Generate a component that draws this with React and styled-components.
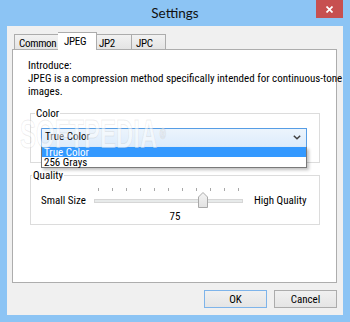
import React from "react";
import styled, { createGlobalStyle } from "styled-components";

const GlobalStyle = createGlobalStyle`
  html, body {
    margin: 0;
    padding: 0;
  }
  body {
    font-family: "Liberation Sans Narrow", "Roboto Condensed", "Liberation Sans", Arial, sans-serif;
    font-size: 11px;
    color: #000;
    background: #fff;
  }
`;

const tabs = [
  { label: "Common", width: 46 },
  { label: "JPEG", width: 35, active: true },
  { label: "JP2", width: 37 },
  { label: "JPC", width: 34 },
];

const SLIDER_VALUE = 75;

const App = () => {
  return (
    <>
      <GlobalStyle />
      <Window>
        <TitleBar>
          <Title>Settings</Title>
          <CloseButton>
            <svg width="7" height="7" viewBox="0 0 7 7">
              <path d="M0.5 0.5 L6.5 6.5 M6.5 0.5 L0.5 6.5" stroke="#fff" strokeWidth="1.7" />
            </svg>
          </CloseButton>
        </TitleBar>

        <Client>
          <TabRow>
            {tabs.map((t) => (
              <Tab key={t.label} $active={t.active} $width={t.width}>
                {t.label}
              </Tab>
            ))}
          </TabRow>

          <Panel>
            <Text>Introduce:</Text>
            <Text>
              JPEG is a compression method specifically intended for continuous-tone
              <br />
              images.
            </Text>

            <GroupBox $top={9}>
              <Legend $offset={4}>Color</Legend>
              <Combo>
                <span>True Color</span>
                <svg width="8" height="5" viewBox="0 0 8 5">
                  <path d="M0.8 0.8 L4 3.8 L7.2 0.8" stroke="#404040" strokeWidth="1.5" fill="none" />
                </svg>
                <DropList>
                  <DropItem $selected>True Color</DropItem>
                  <DropItem>256 Grays</DropItem>
                </DropList>
              </Combo>
            </GroupBox>

            <GroupBox $top={6} $quality>
              <Legend $offset={1}>Quality</Legend>
              <SliderRow>
                <SideLabel>Small Size</SideLabel>
                <Slider>
                  <Ticks>
                    {Array.from({ length: 11 }).map((_, i) => (
                      <Tick key={i} />
                    ))}
                  </Ticks>
                  <Track />
                  <Thumb style={{ left: 4 + (SLIDER_VALUE / 100) * 140 - 5 }}>
                    <svg width="10" height="16" viewBox="0 0 10 16">
                      <defs>
                        <linearGradient id="thumbFill" x1="0" y1="0" x2="0" y2="1">
                          <stop offset="0" stopColor="#f4f4f4" />
                          <stop offset="1" stopColor="#e2e2e2" />
                        </linearGradient>
                      </defs>
                      <path
                        d="M0.5 5 L5 0.5 L9.5 5 V15.5 H0.5 Z"
                        fill="url(#thumbFill)"
                        stroke="#a9a9a9"
                      />
                    </svg>
                  </Thumb>
                </Slider>
                <SideLabel $right>High Quality</SideLabel>
              </SliderRow>
              <ValueLabel>{SLIDER_VALUE}</ValueLabel>
            </GroupBox>
          </Panel>

          <ButtonRow>
            <Button $default>OK</Button>
            <Button>Cancel</Button>
          </ButtonRow>
        </Client>

        <Watermark>
          SOFTPEDIA<sup>®</sup>
        </Watermark>
      </Window>
    </>
  );
};

export default App;

const Window = styled.div`
  width: 350px;
  height: 322px;
  box-sizing: border-box;
  background: #8cc4f4;
  display: flex;
  flex-direction: column;
  position: relative;
  overflow: hidden;
`;

const TitleBar = styled.div`
  height: 26px;
  flex: none;
  display: grid;
  grid-template-columns: 1fr auto 1fr;
  align-items: start;
`;

const Title = styled.div`
  grid-column: 2;
  font-family: Lato, "Open Sans", sans-serif;
  font-size: 13.5px;
  line-height: 18px;
  padding-top: 4px;
  color: #111;
`;

const CloseButton = styled.div`
  grid-column: 3;
  justify-self: end;
  margin-right: 7px;
  width: 27px;
  height: 18px;
  background: #c75050;
  display: flex;
  align-items: center;
  justify-content: center;
`;

const Client = styled.div`
  flex: 1;
  margin: 0 7px 7px;
  background: #f0f0f0;
  display: flex;
  flex-direction: column;
  padding: 6px 6px 7px 5px;
`;

const TabRow = styled.div`
  display: flex;
  align-items: flex-end;
  height: 17px;
  padding-left: 2px;
`;

const Tab = styled.div`
  box-sizing: border-box;
  width: ${(p) => (p.$active ? p.$width + 4 : p.$width)}px;
  height: ${(p) => (p.$active ? 18 : 15)}px;
  margin: ${(p) => (p.$active ? "0 -2px -1px" : "0")};
  padding: ${(p) => (p.$active ? "2px 0 0 6px" : "2px 0 0 4px")};
  line-height: 13px;
  letter-spacing: -0.3px;
  border: 1px solid #acacac;
  border-bottom: none;
  background: ${(p) =>
    p.$active ? "#fff" : "linear-gradient(#f2f2f2, #e4e4e4)"};
  position: relative;
  z-index: ${(p) => (p.$active ? 2 : 1)};
  white-space: nowrap;
  overflow: hidden;
  & + & {
    border-left: ${(p) => (p.$active ? "1px solid #acacac" : "none")};
  }
`;

const Panel = styled.div`
  height: 234px;
  box-sizing: border-box;
  border: 1px solid #adadad;
  background: #fff;
  padding: 9px 16px 0 15px;
  position: relative;
  z-index: 1;
`;

const Text = styled.div`
  line-height: 13px;
  white-space: nowrap;
`;

const GroupBox = styled.fieldset`
  margin: ${(p) => p.$top}px 0 0 2px;
  padding: ${(p) => (p.$quality ? "5px 0 1px" : "8px 0 14px")};
  border: 1px solid #dcdcdc;
  min-width: 0;
`;

const Legend = styled.legend`
  margin-left: ${(p) => p.$offset}px;
  padding: 0 1px;
  line-height: 13px;
`;

const Combo = styled.div`
  position: relative;
  height: 20px;
  margin: 0 12px 0 10px;
  box-sizing: border-box;
  border: 1px solid #569de5;
  background: linear-gradient(#ecf4fc, #dcecfc);
  padding: 1px 5px 0 3px;
  line-height: 13px;
  display: flex;
  align-items: flex-start;
  justify-content: space-between;
  svg {
    margin-top: 5px;
  }
`;

const DropList = styled.div`
  position: absolute;
  top: 100%;
  left: -1px;
  right: -1px;
  background: #fff;
  border: 1px solid #7a7a7a;
  border-top: none;
  box-shadow: 2px 2px 3px rgba(0, 0, 0, 0.25);
  z-index: 3;
`;

const DropItem = styled.div`
  height: 10px;
  line-height: 11px;
  padding-left: 2px;
  background: ${(p) => (p.$selected ? "#3399ff" : "transparent")};
  color: ${(p) => (p.$selected ? "#fff" : "#000")};
`;

const SliderRow = styled.div`
  display: grid;
  grid-template-columns: 53px 149px 1fr;
  padding-left: 10px;
`;

const SideLabel = styled.div`
  line-height: 13px;
  margin-top: 7px;
  padding-left: ${(p) => (p.$right ? 11 : 0)}px;
  white-space: nowrap;
`;

const Slider = styled.div`
  position: relative;
  height: 22px;
`;

const Ticks = styled.div`
  display: flex;
  justify-content: space-between;
  padding: 0 4px;
  margin-top: 1px;
  height: 3px;
`;

const Tick = styled.div`
  width: 1px;
  height: 3px;
  background: #a8a8a8;
`;

const Track = styled.div`
  margin-top: 8px;
  height: 4px;
  box-sizing: border-box;
  border: 1px solid #d6d6d6;
  background: #e7eaea;
`;

const Thumb = styled.div`
  position: absolute;
  top: 5px;
  width: 10px;
  height: 16px;
  svg {
    display: block;
  }
`;

const ValueLabel = styled.div`
  text-align: center;
  line-height: 13px;
  margin-top: 1px;
`;

const ButtonRow = styled.div`
  display: flex;
  justify-content: flex-end;
  gap: 7px;
  margin-top: 7px;
`;

const Button = styled.div`
  width: 63px;
  height: 18px;
  box-sizing: border-box;
  border: 1px solid ${(p) => (p.$default ? "#7eb4ea" : "#acacac")};
  background: linear-gradient(#f0f0f0, #e5e5e5);
  display: flex;
  align-items: center;
  justify-content: center;
  line-height: 13px;
`;

const Watermark = styled.div`
  position: absolute;
  left: 20px;
  top: 114px;
  font-family: "Liberation Sans", Arial, sans-serif;
  font-weight: bold;
  font-size: 40px;
  line-height: 40px;
  transform: scaleX(0.6);
  transform-origin: left top;
  color: rgba(255, 255, 255, 0.5);
  -webkit-text-stroke: 1px rgba(120, 120, 120, 0.14);
  z-index: 5;
  pointer-events: none;
  white-space: nowrap;
  sup {
    font-size: 14px;
    vertical-align: top;
    margin-left: 4px;
  }
`;
